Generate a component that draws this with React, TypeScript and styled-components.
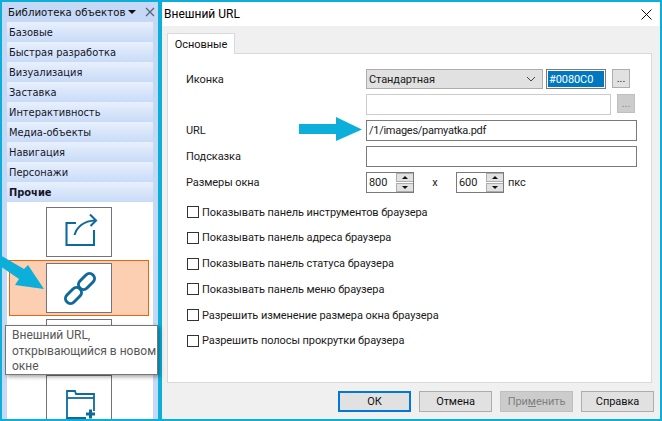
import React from "react";
import styled, { createGlobalStyle } from "styled-components";

const Global = createGlobalStyle`
  html, body { margin: 0; padding: 0; width: 662px; height: 421px; overflow: hidden; }
  #root { width: 662px; height: 421px; }
  * { box-sizing: border-box; }
`;

const Page = styled.div`
  position: relative;
  width: 662px;
  height: 421px;
  background: #0cafd9;
  padding: 2px 2px 2px 2px;
  display: flex;
  gap: 4px;
  font-family: Roboto, "Liberation Sans", sans-serif;
  font-size: 11px;
  letter-spacing: -0.08px;
  color: #1a1a1a;
  overflow: hidden;
`;

const Library = styled.aside`
  width: 156px;
  flex: none;
  background: #c5d9f6;
  padding: 0 5px 0 5px;
  display: flex;
  flex-direction: column;
  overflow: hidden;
  letter-spacing: normal;
`;

const LibraryHead = styled.div`
  height: 20px;
  flex: none;
  display: flex;
  align-items: center;
  padding-left: 1px;
  margin-right: -3px;
  font-family: "DejaVu Sans", sans-serif;
  font-size: 10.2px;
  color: #111;
  white-space: nowrap;
`;

const HeadCaret = styled.span`
  width: 0;
  height: 0;
  margin: 0 0 0 3px;
  border-left: 4px solid transparent;
  border-right: 4px solid transparent;
  border-top: 4px solid #111;
`;

const HeadClose = styled.svg`
  margin-left: auto;
  margin-right: 1px;
`;

const Category = styled.div<{ $active?: boolean }>`
  height: 20px;
  flex: none;
  padding-left: 2px;
  display: flex;
  align-items: center;
  background: linear-gradient(#e8f0fc, #c8dbf7);
  font-family: "DejaVu Sans", sans-serif;
  font-size: 9.9px;
  font-weight: ${(p) => (p.$active ? 700 : 400)};
  color: #15152a;
  white-space: nowrap;
`;

const TileList = styled.div`
  flex: 1;
  background: #fff;
  display: flex;
  flex-direction: column;
  align-items: center;
  padding: 5px 2px 0 0;
  gap: 6px;
  overflow: hidden;
`;

const TileSlot = styled.div<{ $selected?: boolean }>`
  width: 140px;
  height: ${(p) => (p.$selected ? 56 : 50)}px;
  margin: ${(p) => (p.$selected ? "-3px 0" : "0")};
  flex: none;
  display: flex;
  align-items: center;
  justify-content: center;
  background: ${(p) => (p.$selected ? "#fccfb3" : "transparent")};
  border: ${(p) => (p.$selected ? "1px solid #e8650a" : "none")};
`;

const Tile = styled.div`
  width: 66px;
  height: 50px;
  flex: none;
  background: #fff;
  border: 1px solid #73737f;
  position: relative;
`;

const TileIcon = styled.svg`
  position: absolute;
  left: -1px;
  top: -1px;
  fill: none;
  stroke: #0f6a9c;
`;

const Dialog = styled.section`
  flex: 1;
  background: #f0f0f0;
  display: flex;
  flex-direction: column;
  min-width: 0;
`;

const TitleBar = styled.header`
  height: 24px;
  flex: none;
  background: #fff;
  display: flex;
  align-items: center;
  justify-content: space-between;
  padding: 0 8px 0 2px;
  font-size: 12px;
  letter-spacing: normal;
  color: #000;
`;

const Body = styled.div`
  flex: 1;
  display: flex;
  flex-direction: column;
  padding: 7px 8px 0 5px;
`;

const TabStrip = styled.div`
  display: flex;
  margin-bottom: -1px;
  position: relative;
  z-index: 1;
`;

const Tab = styled.div`
  width: 68px;
  height: 21px;
  background: #fff;
  border: 1px solid #d9d9d9;
  border-bottom: none;
  display: flex;
  align-items: center;
  justify-content: center;
  color: #111;
`;

const TabPanel = styled.div`
  height: 330px;
  background: #fff;
  border: 1px solid #d9d9d9;
  padding: 15px 0 0 18px;
  display: flex;
  flex-direction: column;
`;

const FormGrid = styled.div`
  display: grid;
  grid-template-columns: 180px 1fr;
  grid-template-rows: 20px repeat(4, 21px);
  row-gap: 5px;
`;

const Label = styled.div`
  display: flex;
  align-items: center;
  color: #1a1a1a;
`;

const Field = styled.div`
  display: flex;
  align-items: flex-start;
`;

const SelectBox = styled.div`
  width: 177px;
  height: 20px;
  background: #e1e1e1;
  border: 1px solid #adadad;
  display: flex;
  align-items: center;
  justify-content: space-between;
  padding: 0 6px 0 2px;
`;

const ColorInput = styled.div`
  width: 60px;
  height: 20px;
  margin-left: 3px;
  background: #0078c0;
  border: 1px solid #7a7a7a;
  outline: 1px solid #fff;
  outline-offset: -2px;
  color: #fff;
  padding: 0 0 0 2px;
  display: flex;
  align-items: center;
`;

const DotsButton = styled.div<{ $disabled?: boolean }>`
  width: 18px;
  height: 19px;
  margin-left: 6px;
  background: ${(p) => (p.$disabled ? "#cccccc" : "#e1e1e1")};
  border: 1px solid ${(p) => (p.$disabled ? "#bfbfbf" : "#adadad")};
  color: ${(p) => (p.$disabled ? "#8a8a8a" : "#222")};
  display: flex;
  align-items: center;
  justify-content: center;
  line-height: 1;
  padding-bottom: 1px;
`;

const TextInput = styled.div<{ $width: number; $disabled?: boolean }>`
  width: ${(p) => p.$width}px;
  height: 21px;
  background: #fff;
  border: 1px solid ${(p) => (p.$disabled ? "#cccccc" : "#7a7a7a")};
  padding: 0 2px;
  display: flex;
  align-items: center;
  color: #1a1a1a;
  letter-spacing: -0.27px;
`;

const Spin = styled.div`
  width: 48px;
  height: 21px;
  border: 1px solid #7a7a7a;
  display: flex;
  align-items: stretch;
`;

const SpinValue = styled.div`
  flex: 1;
  padding-left: 2px;
  display: flex;
  align-items: center;
`;

const SpinButtons = styled.div`
  width: 17px;
  display: flex;
  flex-direction: column;
  gap: 1px;
  background: #fff;
`;

const SpinButton = styled.div<{ $down?: boolean }>`
  flex: 1;
  background: #e1e1e1;
  border: 1px solid #adadad;
  border-right: none;
  display: flex;
  align-items: center;
  justify-content: center;
  &::after {
    content: "";
    width: 0;
    height: 0;
    border-left: 3px solid transparent;
    border-right: 3px solid transparent;
    ${(p) => (p.$down ? "border-top: 3px solid #111;" : "border-bottom: 3px solid #111;")}
  }
`;

const SizeX = styled.span`
  width: 42px;
  text-align: center;
  align-self: center;
`;

const Unit = styled.span`
  margin-left: 4px;
  align-self: center;
`;

const Checks = styled.div`
  margin-top: 12px;
  display: flex;
  flex-direction: column;
  gap: 11.8px;
`;

const CheckRow = styled.label`
  display: flex;
  align-items: center;
  height: 14px;
  gap: 3px;
  padding-left: 1px;
  white-space: nowrap;
`;

const CheckBox = styled.span`
  width: 12px;
  height: 12px;
  flex: none;
  background: #fff;
  border: 1px solid #333;
`;

const Footer = styled.footer`
  display: flex;
  justify-content: flex-end;
  gap: 8px;
  margin-top: 8px;
  margin-right: -2px;
`;

const FooterButton = styled.div<{ $primary?: boolean; $disabled?: boolean }>`
  width: 73px;
  height: 21px;
  background: ${(p) => (p.$disabled ? "#cccccc" : "#e1e1e1")};
  border: ${(p) => (p.$primary ? "2px solid #0078d7" : `1px solid ${p.$disabled ? "#bfbfbf" : "#adadad"}`)};
  color: ${(p) => (p.$disabled ? "#808080" : "#111")};
  display: flex;
  align-items: center;
  justify-content: center;
`;

const Underlined = styled.span`
  text-decoration: underline;
`;

const Tooltip = styled.div`
  position: absolute;
  left: 5px;
  top: 325px;
  width: 153px;
  height: 50px;
  padding: 2px 0 2px 6px;
  background: #fff;
  border: 1px solid #767676;
  box-shadow: 2px 2px 4px rgba(0, 0, 0, 0.35);
  font-size: 12px;
  letter-spacing: normal;
  line-height: 15.5px;
  color: #575757;
`;

const Arrow = styled.svg`
  position: absolute;
  fill: #0cafd9;
`;

const categories = [
  "Базовые",
  "Быстрая разработка",
  "Визуализация",
  "Заставка",
  "Интерактивность",
  "Медиа-объекты",
  "Навигация",
  "Персонажи",
];

const checks = [
  "Показывать панель инструментов браузера",
  "Показывать панель адреса браузера",
  "Показывать панель статуса браузера",
  "Показывать панель меню браузера",
  "Разрешить изменение размера окна браузера",
  "Разрешить полосы прокрутки браузера",
];

const SizeSpin = ({ value }: { value: string }) => (
  <Spin>
    <SpinValue>{value}</SpinValue>
    <SpinButtons>
      <SpinButton />
      <SpinButton $down />
    </SpinButtons>
  </Spin>
);

const ShareIcon = () => (
  <TileIcon width="66" height="50" viewBox="0 0 66 50" strokeWidth="2.1">
    <path d="M30 16H20.5V38H48V23" />
    <path d="M28.5 28C31 20 38 14 49 13.5" />
    <path d="M44 7.5L50 13.5L44.5 19" />
  </TileIcon>
);

const LinkIcon = () => (
  <TileIcon width="66" height="50" viewBox="0 0 66 50" strokeWidth="3">
    <rect x="31.25" y="13.5" width="18.5" height="10" rx="5" transform="rotate(-45 40.5 18.5)" />
    <rect x="18.25" y="27.5" width="18.5" height="10" rx="5" transform="rotate(-45 27.5 32.5)" />
  </TileIcon>
);

const FolderIcon = () => (
  <TileIcon width="66" height="50" viewBox="0 0 66 50" strokeWidth="1.8">
    <path d="M21 23V16H29L30 19H48V36" />
    <path d="M21 23H48" />
    <path d="M21 23V43H40" />
    <path d="M44.5 34.5V43.5M40 39H49" strokeWidth="3" />
  </TileIcon>
);

export default function App() {
  return (
    <>
      <Global />
      <Page>
        <Library>
          <LibraryHead>
            Библиотека объектов
            <HeadCaret />
            <HeadClose width="10" height="10" viewBox="0 0 10 10" fill="none" stroke="#5a6a7a" strokeWidth="1.4">
              <path d="M1 1L9 9M9 1L1 9" />
            </HeadClose>
          </LibraryHead>
          {categories.map((c) => (
            <Category key={c}>{c}</Category>
          ))}
          <Category $active>Прочие</Category>
          <TileList>
            <TileSlot>
              <Tile>
                <ShareIcon />
              </Tile>
            </TileSlot>
            <TileSlot $selected>
              <Tile>
                <LinkIcon />
              </Tile>
            </TileSlot>
            <TileSlot>
              <Tile />
            </TileSlot>
            <TileSlot>
              <Tile>
                <FolderIcon />
              </Tile>
            </TileSlot>
          </TileList>
        </Library>
        <Dialog>
          <TitleBar>
            Внешний URL
            <svg width="11" height="11" viewBox="0 0 11 11" fill="none" stroke="#111" strokeWidth="1">
              <path d="M0.5 0.5L10.5 10.5M10.5 0.5L0.5 10.5" />
            </svg>
          </TitleBar>
          <Body>
            <TabStrip>
              <Tab>Основные</Tab>
            </TabStrip>
            <TabPanel>
              <FormGrid>
                <Label>Иконка</Label>
                <Field>
                  <SelectBox>
                    Стандартная
                    <svg width="10" height="6" viewBox="0 0 10 6" fill="none" stroke="#444" strokeWidth="1">
                      <path d="M1 1L5 5L9 1" />
                    </svg>
                  </SelectBox>
                  <ColorInput>#0080C0</ColorInput>
                  <DotsButton>...</DotsButton>
                </Field>
                <Label />
                <Field>
                  <TextInput $width={245} $disabled />
                  <DotsButton $disabled>...</DotsButton>
                </Field>
                <Label>URL</Label>
                <Field>
                  <TextInput $width={271}>/1/images/pamyatka.pdf</TextInput>
                </Field>
                <Label>Подсказка</Label>
                <Field>
                  <TextInput $width={271} />
                </Field>
                <Label>Размеры окна</Label>
                <Field>
                  <SizeSpin value="800" />
                  <SizeX>x</SizeX>
                  <SizeSpin value="600" />
                  <Unit>пкс</Unit>
                </Field>
              </FormGrid>
              <Checks>
                {checks.map((c) => (
                  <CheckRow key={c}>
                    <CheckBox />
                    {c}
                  </CheckRow>
                ))}
              </Checks>
            </TabPanel>
            <Footer>
              <FooterButton $primary>ОК</FooterButton>
              <FooterButton>Отмена</FooterButton>
              <FooterButton $disabled>
                <span>
                  При<Underlined>м</Underlined>енить
                </span>
              </FooterButton>
              <FooterButton>Справка</FooterButton>
            </Footer>
          </Body>
        </Dialog>
        <Tooltip>Внешний URL, открывающийся в новом окне</Tooltip>
        <Arrow style={{ left: 0, top: 250 }} width="48" height="44" viewBox="0 250 48 44">
          <polygon points="0,255 24,269 28,265 44,289 15,285 19,279 0,266" />
        </Arrow>
        <Arrow style={{ left: 299, top: 117 }} width="63" height="24" viewBox="299 117 63 24">
          <polygon points="299,124 336,124 336,117 362,129.5 336,141 336,134 299,134" />
        </Arrow>
      </Page>
    </>
  );
}
